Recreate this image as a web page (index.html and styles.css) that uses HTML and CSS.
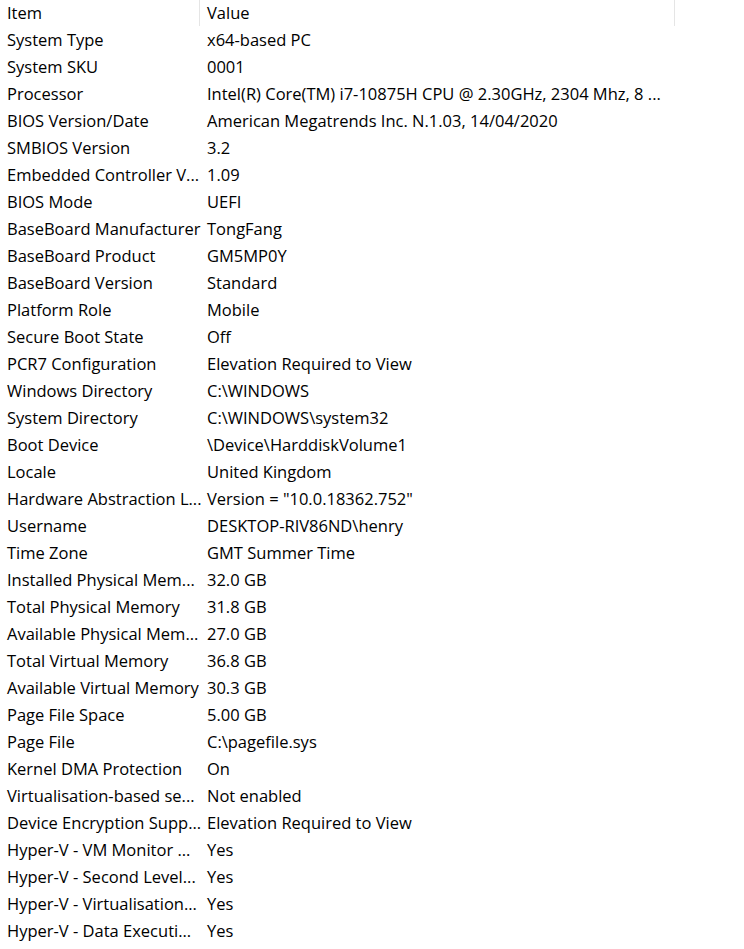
FILE: index.html
```html
<!DOCTYPE html>
<html>
<head>
<meta charset="utf-8">
<link rel="stylesheet" href="styles.css">
</head>
<body>
<div class="list">
  <div class="row header"><div class="cell item">Item</div><div class="cell value">Value</div></div>
  <div class="row"><div class="cell item">System Type</div><div class="cell value">x64-based PC</div></div>
  <div class="row"><div class="cell item">System SKU</div><div class="cell value">0001</div></div>
  <div class="row"><div class="cell item">Processor</div><div class="cell value">Intel(R) Core(TM) i7-10875H CPU @ 2.30GHz, 2304 Mhz, 8 ...</div></div>
  <div class="row"><div class="cell item">BIOS Version/Date</div><div class="cell value">American Megatrends Inc. N.1.03, 14/04/2020</div></div>
  <div class="row"><div class="cell item">SMBIOS Version</div><div class="cell value">3.2</div></div>
  <div class="row"><div class="cell item">Embedded Controller V...</div><div class="cell value">1.09</div></div>
  <div class="row"><div class="cell item">BIOS Mode</div><div class="cell value">UEFI</div></div>
  <div class="row"><div class="cell item">BaseBoard Manufacturer</div><div class="cell value">TongFang</div></div>
  <div class="row"><div class="cell item">BaseBoard Product</div><div class="cell value">GM5MP0Y</div></div>
  <div class="row"><div class="cell item">BaseBoard Version</div><div class="cell value">Standard</div></div>
  <div class="row"><div class="cell item">Platform Role</div><div class="cell value">Mobile</div></div>
  <div class="row"><div class="cell item">Secure Boot State</div><div class="cell value">Off</div></div>
  <div class="row"><div class="cell item">PCR7 Configuration</div><div class="cell value">Elevation Required to View</div></div>
  <div class="row"><div class="cell item">Windows Directory</div><div class="cell value">C:\WINDOWS</div></div>
  <div class="row"><div class="cell item">System Directory</div><div class="cell value">C:\WINDOWS\system32</div></div>
  <div class="row"><div class="cell item">Boot Device</div><div class="cell value">\Device\HarddiskVolume1</div></div>
  <div class="row"><div class="cell item">Locale</div><div class="cell value">United Kingdom</div></div>
  <div class="row"><div class="cell item">Hardware Abstraction L...</div><div class="cell value">Version = "10.0.18362.752"</div></div>
  <div class="row"><div class="cell item">Username</div><div class="cell value">DESKTOP-RIV86ND\henry</div></div>
  <div class="row"><div class="cell item">Time Zone</div><div class="cell value">GMT Summer Time</div></div>
  <div class="row"><div class="cell item">Installed Physical Mem...</div><div class="cell value">32.0 GB</div></div>
  <div class="row"><div class="cell item">Total Physical Memory</div><div class="cell value">31.8 GB</div></div>
  <div class="row"><div class="cell item">Available Physical Mem...</div><div class="cell value">27.0 GB</div></div>
  <div class="row"><div class="cell item">Total Virtual Memory</div><div class="cell value">36.8 GB</div></div>
  <div class="row"><div class="cell item">Available Virtual Memory</div><div class="cell value">30.3 GB</div></div>
  <div class="row"><div class="cell item">Page File Space</div><div class="cell value">5.00 GB</div></div>
  <div class="row"><div class="cell item">Page File</div><div class="cell value">C:\pagefile.sys</div></div>
  <div class="row"><div class="cell item">Kernel DMA Protection</div><div class="cell value">On</div></div>
  <div class="row"><div class="cell item">Virtualisation-based se...</div><div class="cell value">Not enabled</div></div>
  <div class="row"><div class="cell item">Device Encryption Supp...</div><div class="cell value">Elevation Required to View</div></div>
  <div class="row"><div class="cell item">Hyper-V - VM Monitor ...</div><div class="cell value">Yes</div></div>
  <div class="row"><div class="cell item">Hyper-V - Second Level...</div><div class="cell value">Yes</div></div>
  <div class="row"><div class="cell item">Hyper-V - Virtualisation...</div><div class="cell value">Yes</div></div>
  <div class="row"><div class="cell item">Hyper-V - Data Executi...</div><div class="cell value">Yes</div></div>
</div>
</body>
</html>
```
FILE: styles.css
```css
html, body {
  margin: 0;
  padding: 0;
  background: #ffffff;
}
body {
  font-family: "Open Sans", "Noto Sans", sans-serif;
  font-size: 16.5px;
  color: #000000;
}
.list {
  display: flex;
  flex-direction: column;
}
.row {
  display: grid;
  grid-template-columns: 200px 475px;
  height: 27px;
}
.cell {
  padding-left: 7px;
  white-space: nowrap;
  line-height: 25px;
}
.header .cell {
  position: relative;
}
.header .cell::after {
  content: "";
  position: absolute;
  right: 0;
  top: 0;
  width: 1px;
  height: 26px;
  background: #e5e5e5;
}
```
